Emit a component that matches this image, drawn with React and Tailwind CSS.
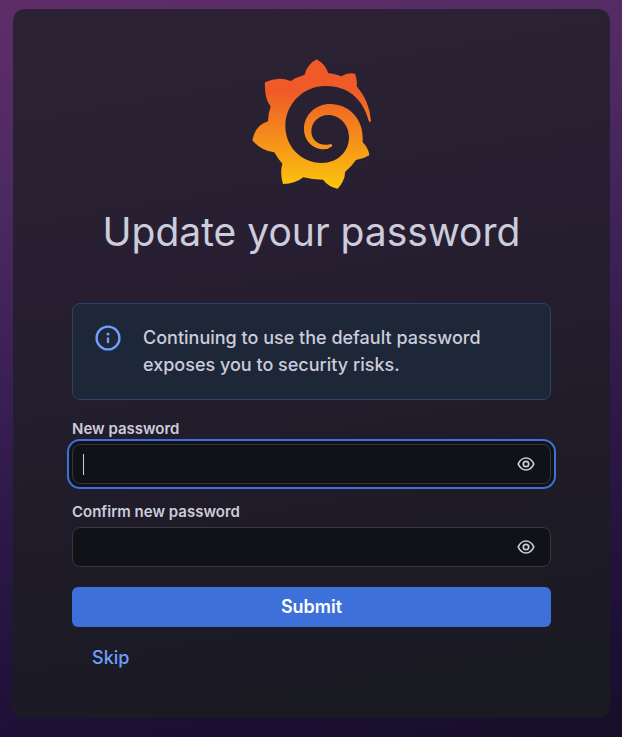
import React, { useState } from 'react';

function GrafanaLogo() {
  return (
    <svg viewBox="-3 0 435 435" className="h-[145px] w-[145px]" role="img" aria-label="Grafana">
      <defs>
        <linearGradient id="flame" gradientUnits="userSpaceOnUse" x1="217" y1="530" x2="217" y2="125">
          <stop offset="0" stopColor="#fff100" />
          <stop offset="1" stopColor="#f05a28" />
        </linearGradient>
      </defs>
      <path
        fill="url(#flame)"
        d="M387 214 C378 184 354 108 256 108 C190 108 136 162 136 228 C136 290 184 339 245 339 C292 339 327 306 327 262 C327 224 299 195 265 195 C237 195 214 216 214 244 C214 272 238 290 270 283 Q274 281 276 284 Q278 287 274 290 Q264 298 250 298 C217 298 192 270 192 238 C192 194 227 162 270 162 C326 162 368 206 368 262 L368 277 Q385 293 388 316 Q370 327 348 330 Q334 350 315 366 Q316 390 293 416 Q266 411 249 389 Q216 389 190 382 Q167 401 129 402 Q119 370 127 341 Q112 324 103 307 Q64 302 37 271 Q46 225 84 214 Q84 191 92 170 Q72 142 75 97 Q114 78 152 93 Q170 81 194 74 Q202 42 230 28 Q258 44 264 69 Q285 71 304 79 Q323 67 345 71 Q353 90 350 109 Q389 153 393 214 Q390 218 387 214 Z"
      />
    </svg>
  );
}

function InfoIcon() {
  return (
    <svg viewBox="0 0 24 24" className="h-7 w-7 shrink-0 text-[#6e9fff]" fill="none" stroke="currentColor" strokeWidth="2" aria-hidden="true">
      <circle cx="12" cy="12" r="9.8" />
      <path strokeLinecap="round" d="M12 12.4v3.2" />
      <circle cx="12" cy="8.6" r="1.3" fill="currentColor" stroke="none" />
    </svg>
  );
}

function EyeIcon() {
  return (
    <svg viewBox="0 0 24 24" className="h-[18px] w-[18px]" fill="none" stroke="currentColor" strokeWidth="2.3" aria-hidden="true">
      <path strokeLinejoin="round" d="M1.6 12C3.8 7.2 7.5 4 12 4s8.2 3.2 10.4 8C20.2 16.8 16.5 20 12 20S3.8 16.8 1.6 12Z" />
      <circle cx="12" cy="12" r="3.6" />
    </svg>
  );
}

function PasswordField({ id, label, active }) {
  const [value, setValue] = useState('');
  const [visible, setVisible] = useState(false);

  return (
    <div>
      <label htmlFor={id} className="block text-[15px] leading-5 font-semibold text-[#ccccdc]">
        {label}
      </label>
      <div className={`relative mt-[5px] flex h-10 items-center rounded-lg border border-[#37373d] bg-[#111217] ${active ? 'ring-2 ring-[#3d71d9] ring-offset-3 ring-offset-[#111217]' : ''}`}>
        <input
          id={id}
          type={visible ? 'text' : 'password'}
          value={value}
          onChange={(e) => setValue(e.target.value)}
          autoFocus={active}
          className={`h-full min-w-0 flex-1 bg-transparent px-[10px] text-lg text-[#ccccdc] outline-none ${active ? 'caret-transparent' : ''}`}
        />
        {/* Text cursor */}
        {active && !value && <span className="absolute left-[10px] h-[21px] w-px bg-[#ccccdc]" />}
        <button
          type="button"
          aria-label="Show password"
          onClick={() => setVisible(!visible)}
          className="px-[15px] text-[#ccccdc]"
        >
          <EyeIcon />
        </button>
      </div>
    </div>
  );
}

function App() {
  return (
    <div className="min-h-screen bg-linear-[170deg,#5f2d68_0%,#4e2a62_22%,#2e194a_60%,#1b0f33_90%,#170f28_100%] pt-[9px] pr-3 pb-5 pl-[13px] font-['Inter',sans-serif]">
      <main className="rounded-xl bg-linear-[170deg,#2c2234_0%,#271f31_35%,#1e1b27_70%,#191a22_100%] px-[59px] pt-[41px] pb-10">
        <header className="flex flex-col items-center">
          <GrafanaLogo />
          <h1 className="mt-3 text-center text-[39px] leading-[50px] text-[#ccccdc]">Update your password</h1>
        </header>

        {/* Default password warning */}
        <div role="status" className="mt-[46px] flex gap-[21px] rounded-lg border border-[#2b446e] bg-[#1e2737] px-[21px] pt-5 pb-[21px] text-[#ccccdc]">
          <InfoIcon />
          <p className="text-lg leading-[27px] font-medium">
            Continuing to use the default password exposes you to security risks.
          </p>
        </div>

        <form className="mt-[19px]" onSubmit={(e) => e.preventDefault()}>
          <div className="flex flex-col gap-[18px]">
            <PasswordField id="new-password" label="New password" active />
            <PasswordField id="confirm-password" label="Confirm new password" />
          </div>
          <button type="submit" className="mt-5 h-10 w-full rounded-md bg-[#3d71d9] text-lg font-semibold text-white">
            Submit
          </button>
          <button type="button" className="mt-[11px] h-10 px-5 text-lg font-medium text-[#6e9fff]">
            Skip
          </button>
        </form>
      </main>
    </div>
  );
}

export default App;
